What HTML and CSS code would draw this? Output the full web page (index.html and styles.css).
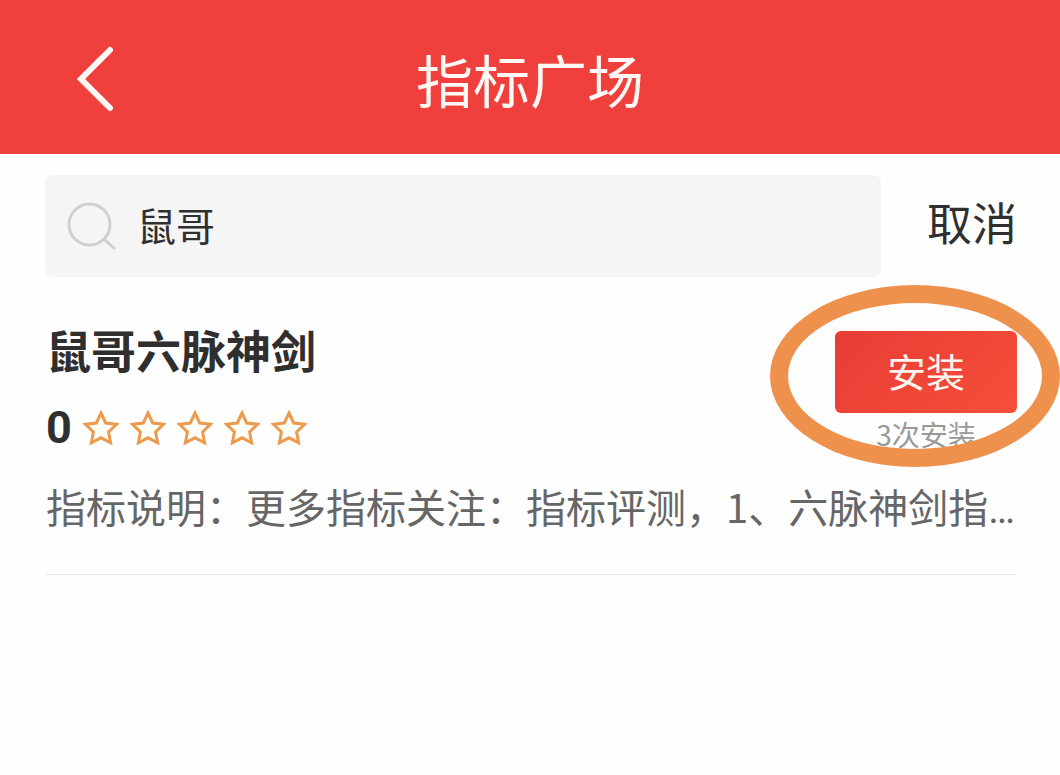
FILE: index.html
```html
<!DOCTYPE html>
<html lang="zh-CN">
<head>
  <meta charset="UTF-8">
  <meta name="viewport" content="width=device-width, initial-scale=1">
  <title>指标广场</title>
  <link rel="stylesheet" href="styles.css">
</head>
<body>
<svg class="defs" width="0" height="0" aria-hidden="true">
  <symbol id="star" viewBox="0 0 36 36">
    <path d="M18 3 L22.7 13 L33.5 14.3 L25.6 22 L27.6 32.8 L18 27.8 L8.4 32.8 L10.4 22 L2.5 14.3 L13.3 13 Z"/>
  </symbol>
</svg>

<header class="header">
  <button type="button" class="back" aria-label="返回">
    <svg width="40" height="68" viewBox="0 0 40 68"><path d="M35 5 L6 34 L35 63"/></svg>
  </button>
  <h1 class="title">指标广场</h1>
</header>

<form class="search">
  <label class="search-box">
    <svg class="search-icon" width="50" height="50" viewBox="0 0 50 50" role="img" aria-label="搜索">
      <circle cx="22.500" cy="23.500" r="20.500"/>
      <path d="M37 38 L48 48"/>
    </svg>
    <input type="text" class="search-input" value="鼠哥">
  </label>
  <button type="button" class="cancel">取消</button>
</form>

<main class="list">
  <article class="item">
    <div class="item-top">
      <div class="info">
        <h2 class="name">鼠哥六脉神剑</h2>
        <div class="rating">
          <span class="score">0</span>
          <svg class="star"><use href="#star"/></svg>
          <svg class="star"><use href="#star"/></svg>
          <svg class="star"><use href="#star"/></svg>
          <svg class="star"><use href="#star"/></svg>
          <svg class="star"><use href="#star"/></svg>
        </div>
      </div>
      <div class="action">
        <button type="button" class="install">安装</button>
        <span class="count">3次安装</span>
        <span class="mark"></span>
      </div>
    </div>
    <p class="desc">指标说明：更多指标关注：指标评测，1、六脉神剑指<span class="more">…</span></p>
  </article>
</main>
</body>
</html>
```

FILE: styles.css
```css
* {
  box-sizing: border-box;
}

body {
  margin: 0;
  background: #fefefe;
  color: #2f2f2f;
  font-family: "Noto Sans CJK SC", sans-serif;
  overflow-x: hidden;
}

button {
  border: 0;
  padding: 0;
  background: none;
  color: inherit;
  font-family: inherit;
}

.defs {
  position: absolute;
}

/* 顶部标题栏 */
.header {
  display: grid;
  grid-template-columns: 120px 1fr 120px;
  align-items: center;
  padding: 36px 0 34px;
  background: #ef403e;
  color: #fff8f4;
}

.back {
  display: flex;
  justify-content: flex-end;
  padding: 2px 5px 0 0;
}

.back path {
  fill: none;
  stroke: #fff8f4;
  stroke-width: 6;
  stroke-linecap: round;
}

.title {
  margin: 0;
  font-size: 57px;
  font-weight: 400;
  line-height: 84px;
  text-align: center;
}

/* 搜索 */
.search {
  display: flex;
  align-items: center;
  gap: 46px;
  padding: 21px 43px 0 45px;
}

.search-box {
  display: flex;
  flex: 1;
  align-items: center;
  gap: 20px;
  min-width: 0;
  height: 102px;
  padding: 0 22px;
  border-radius: 8px;
  background: #f5f5f5;
}

.search-icon {
  flex: none;
  fill: none;
  stroke: #d0d0d0;
  stroke-width: 3;
}

.search-input {
  flex: 1;
  min-width: 0;
  border: 0;
  padding: 0 0 4px;
  outline: 0;
  background: none;
  color: #2f2f2f;
  font-family: inherit;
  font-size: 39px;
}

.cancel {
  padding-bottom: 8px;
  font-size: 45px;
  line-height: 60px;
}

/* 指标列表 */
.list {
  padding: 0 43px 0 46px;
}

.item {
  padding: 43px 0 34px;
  border-bottom: 1px solid #e9e9e9;
}

.item-top {
  display: flex;
  justify-content: space-between;
}

.name {
  margin: 0;
  font-size: 45px;
  font-weight: 700;
  line-height: 60px;
}

.rating {
  display: flex;
  align-items: center;
  gap: 11px;
  margin-top: 18px;
}

.score {
  font-family: Roboto, sans-serif;
  font-size: 45px;
  font-weight: 700;
  line-height: 60px;
}

.star {
  width: 36px;
  height: 36px;
  fill: #fffdf8;
  stroke: #ec9a4e;
  stroke-width: 3;
}

.action {
  position: relative;
  width: 182px;
  padding-top: 11px;
  text-align: center;
}

.install {
  display: block;
  width: 100%;
  height: 82px;
  padding-bottom: 4px;
  border-radius: 6px;
  background: linear-gradient(135deg, #e83c35, #f54f3a);
  color: #fff4ee;
  font-size: 39px;
}

.count {
  display: block;
  color: #999;
  font-size: 28px;
  line-height: 42px;
}

/* 安装按钮外的圈 */
.mark {
  position: absolute;
  top: -35px;
  right: -43px;
  width: 290px;
  height: 182px;
  border: 18px solid #ee914d;
  border-radius: 50%;
  pointer-events: none;
}

.desc {
  margin: 18px 0 0;
  color: #666;
  font-size: 40px;
  line-height: 60px;
  white-space: nowrap;
}

.more {
  font-family: Roboto, sans-serif;
}
```
